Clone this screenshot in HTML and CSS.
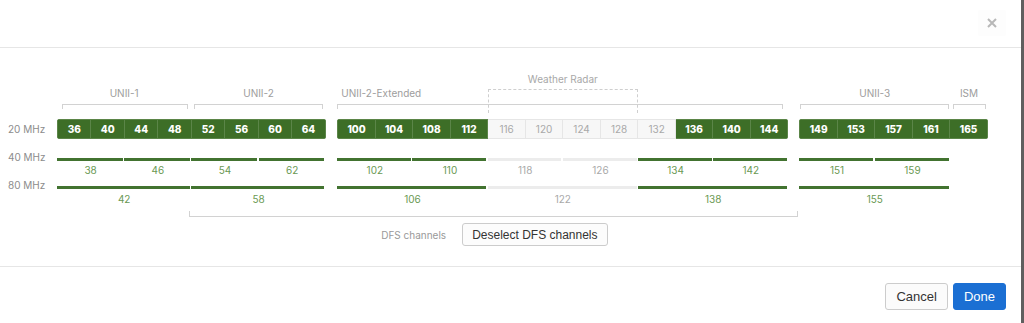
FILE: index.html
```html
<!DOCTYPE html>
<html>
<head>
<meta charset="utf-8">
<title>Channels</title>
<link rel="stylesheet" href="styles.css">
</head>
<body>
<div class="modal">
  <div class="modal-header">
    <button class="close" aria-label="Close">
      <svg width="10" height="10" viewBox="0 0 10 10"><path d="M1 1 L9 9 M9 1 L1 9" stroke="#b8b8b8" stroke-width="2" fill="none"/></svg>
    </button>
  </div>
  <div class="modal-body">
    <div class="cols regions">
      <div class="lbl-col"></div>
      <div class="region s4 r-unii1"><div class="rlabel">UNII-1</div><div class="bracket"></div></div>
      <div class="region s4 r-unii2"><div class="rlabel">UNII-2</div><div class="bracket"></div></div>
      <div class="gapcol"></div>
      <div class="region region-ext s12">
        <div class="wr-label">Weather Radar</div>
        <div class="rlabel">UNII-2-Extended</div>
        <div class="bracket"></div>
        <div class="wr-box"></div>
      </div>
      <div class="gapcol"></div>
      <div class="region s4 r-unii3"><div class="rlabel">UNII-3</div><div class="bracket"></div></div>
      <div class="region s1 r-ism"><div class="rlabel">ISM</div><div class="bracket"></div></div>
    </div>

    <div class="cols row20">
      <div class="rowlabel">20 MHz</div>
      <div class="group s8">
        <div class="ch on">36</div><div class="ch on">40</div><div class="ch on">44</div><div class="ch on">48</div>
        <div class="ch on">52</div><div class="ch on">56</div><div class="ch on">60</div><div class="ch on">64</div>
      </div>
      <div class="gapcol"></div>
      <div class="group s12">
        <div class="ch on">100</div><div class="ch on">104</div><div class="ch on">108</div><div class="ch on">112</div>
        <div class="ch off">116</div><div class="ch off">120</div><div class="ch off">124</div><div class="ch off">128</div>
        <div class="ch off">132</div><div class="ch on">136</div><div class="ch on">140</div><div class="ch on">144</div>
      </div>
      <div class="gapcol"></div>
      <div class="group s5">
        <div class="ch on">149</div><div class="ch on">153</div><div class="ch on">157</div><div class="ch on">161</div><div class="ch on">165</div>
      </div>
    </div>

    <div class="cols row40">
      <div class="rowlabel">40 MHz</div>
      <div class="band s2 on"><div class="bar"></div><div class="num">38</div></div>
      <div class="band s2 on"><div class="bar"></div><div class="num">46</div></div>
      <div class="band s2 on"><div class="bar"></div><div class="num">54</div></div>
      <div class="band s2 on"><div class="bar"></div><div class="num">62</div></div>
      <div class="gapcol"></div>
      <div class="band s2 on"><div class="bar"></div><div class="num">102</div></div>
      <div class="band s2 on"><div class="bar"></div><div class="num">110</div></div>
      <div class="band s2 off"><div class="bar"></div><div class="num">118</div></div>
      <div class="band s2 off"><div class="bar"></div><div class="num">126</div></div>
      <div class="band s2 on"><div class="bar"></div><div class="num">134</div></div>
      <div class="band s2 on"><div class="bar"></div><div class="num">142</div></div>
      <div class="gapcol"></div>
      <div class="band s2 on"><div class="bar"></div><div class="num">151</div></div>
      <div class="band s2 on"><div class="bar"></div><div class="num">159</div></div>
    </div>

    <div class="cols row80">
      <div class="rowlabel">80 MHz</div>
      <div class="band s4 on"><div class="bar"></div><div class="num">42</div></div>
      <div class="band s4 on"><div class="bar"></div><div class="num">58</div></div>
      <div class="gapcol"></div>
      <div class="band s4 on"><div class="bar"></div><div class="num">106</div></div>
      <div class="band s4 off"><div class="bar"></div><div class="num">122</div></div>
      <div class="band s4 on"><div class="bar"></div><div class="num">138</div></div>
      <div class="gapcol"></div>
      <div class="band s4 on"><div class="bar"></div><div class="num">155</div></div>
    </div>

    <div class="cols dfs">
      <div class="lbl-col"></div>
      <div class="s4"></div>
      <div class="dfs-span">
        <div class="dfs-bracket"></div>
        <div class="dfs-row">
          <span class="dfs-label">DFS channels</span>
          <button class="btn btn-dfs">Deselect DFS channels</button>
        </div>
      </div>
    </div>
  </div>
  <div class="modal-footer">
    <button class="btn btn-default">Cancel</button>
    <button class="btn btn-primary">Done</button>
  </div>
</div>
</body>
</html>
```

FILE: styles.css
```css
* { box-sizing: border-box; }
html, body { margin: 0; height: 100%; }
body {
  background: #5f5f5f;
  font-family: Inter, "Noto Sans", sans-serif;
  overflow: hidden;
}
.modal {
  width: 1021px;
  height: 323px;
  background: #fff;
  display: flex;
  flex-direction: column;
}
.modal-header {
  height: 48px;
  border-bottom: 1px solid #e6e6e6;
  display: flex;
  justify-content: flex-end;
  align-items: center;
  padding-right: 15px;
}
.close {
  width: 28px;
  height: 26px;
  border: 0;
  border-radius: 2px;
  background: #fdfdfd;
  display: flex;
  align-items: center;
  justify-content: center;
  padding: 0;
  margin-top: -1px;
}
.modal-body {
  height: 218px;
  padding-top: 23px;
}
.cols {
  display: grid;
  grid-template-columns: 49px repeat(8, 33.6px) 11.5px repeat(12, 37.6px) 11px repeat(5, 37.7px);
  padding-left: 8px;
}
.s1 { grid-column: span 1; }
.s2 { grid-column: span 2; }
.s4 { grid-column: span 4; }
.s5 { grid-column: span 5; }
.s8 { grid-column: span 8; }
.s12 { grid-column: span 12; }

/* regions */
.region {
  display: grid;
  grid-template-rows: 16px 13px 13px;
}
.rlabel {
  grid-row: 2;
  font-size: 10px;
  line-height: 13px;
  color: #9d9d9d;
  text-align: center;
  white-space: nowrap;
}
.bracket {
  grid-row: 3;
  margin-top: 4px;
  height: 5px;
  border: 1px solid #d2d2d2;
  border-bottom: 0;
}
.r-unii1 .bracket { margin-left: 5px; margin-right: 3px; }
.r-unii2 .bracket { margin-left: 3px; margin-right: 3px; }
.r-unii3 .bracket { margin-left: 0.5px; margin-right: 1px; }
.r-ism .bracket { margin-left: 2.5px; margin-right: 2px; }
.region-ext { grid-template-columns: repeat(12, 1fr); }
.region-ext .rlabel { grid-column: 1 / -1; text-align: left; padding-left: 4px; }
.region-ext .bracket { grid-column: 1 / -1; margin-right: 5px; }
.wr-label {
  grid-row: 1;
  grid-column: 5 / 9;
  font-size: 10px;
  line-height: 16px;
  color: #a8a8a8;
  text-align: center;
}
.wr-box {
  grid-row: 2 / 4;
  grid-column: 5 / 9;
  margin-top: 2px;
  border: 1px dashed #cfcfcf;
  border-bottom: 0;
}

/* 20 MHz */
.row20 { margin-top: 6px; }
.rowlabel {
  font-size: 10px;
  line-height: 12px;
  color: #8c8c8c;
  white-space: nowrap;
  align-self: center;
}
.group {
  display: flex;
  height: 20px;
  border-radius: 3px;
  overflow: hidden;
}
.ch {
  flex: 1;
  display: flex;
  align-items: center;
  justify-content: center;
  font-size: 10px;
  font-weight: 800;
  border: 1px solid;
  border-left-width: 0;
}
.ch:first-child { border-left-width: 1px; }
.ch.on {
  background: #3d6e27;
  color: #fff;
  border-color: #5b8548;
}
.ch + .ch.on { border-left-color: rgba(255, 255, 255, 0.5); }
.ch.off {
  background: #f7f7f7;
  color: #a9a9a9;
  font-weight: 400;
  border-color: #e6e6e6;
}
.ch + .ch.off { border-left-color: #e3e3e3; }

/* bands */
.row40 { margin-top: 19px; }
.row80 { margin-top: 9px; }
.row40 .rowlabel, .row80 .rowlabel { align-self: start; margin-top: -7px; }
.band .bar { height: 3px; margin-right: 1.5px; }
.band .num {
  font-size: 10px;
  line-height: 14px;
  text-align: center;
  margin-top: 2px;
}
.row80 .band .num { margin-top: 3px; }
.band.on .bar { background: #427330; }
.band.on .num { color: #6a9953; }
.band.off .bar { background: #ececec; }
.band.off .num { color: #a9a9a9; }

/* DFS */
.dfs { margin-top: 5px; }
.dfs-span { grid-column: span 18; }
.dfs-bracket {
  height: 6px;
  border: 1px solid #d2d2d2;
  border-top: 0;
  margin-left: -2px;
  margin-right: 1.5px;
}
.dfs-row {
  margin-top: 6px;
  display: flex;
  justify-content: center;
  align-items: center;
  gap: 16px;
  padding-right: 2px;
}
.dfs-label {
  font-size: 10px;
  color: #999;
}
.btn {
  font-family: "Liberation Sans", Arial, sans-serif;
  font-size: 13px;
  color: #333;
  background: #fff;
  border: 1px solid #cccccc;
  border-radius: 3px;
  height: 27px;
  padding: 0 10px;
  cursor: pointer;
}
.btn-dfs {
  height: 23px;
  font-size: 12px;
  padding: 0 9px;
  background: #fcfcfc;
}

/* footer */
.modal-footer {
  flex: 1;
  border-top: 1px solid #e6e6e6;
  display: flex;
  justify-content: flex-end;
  align-items: flex-start;
  gap: 5px;
  padding: 16px 15px 0 0;
}
.btn-default { background: #fbfbfb; }
.btn-primary {
  background: #1b6fd3;
  border-color: #1b6fd3;
  color: #fff;
}
```
